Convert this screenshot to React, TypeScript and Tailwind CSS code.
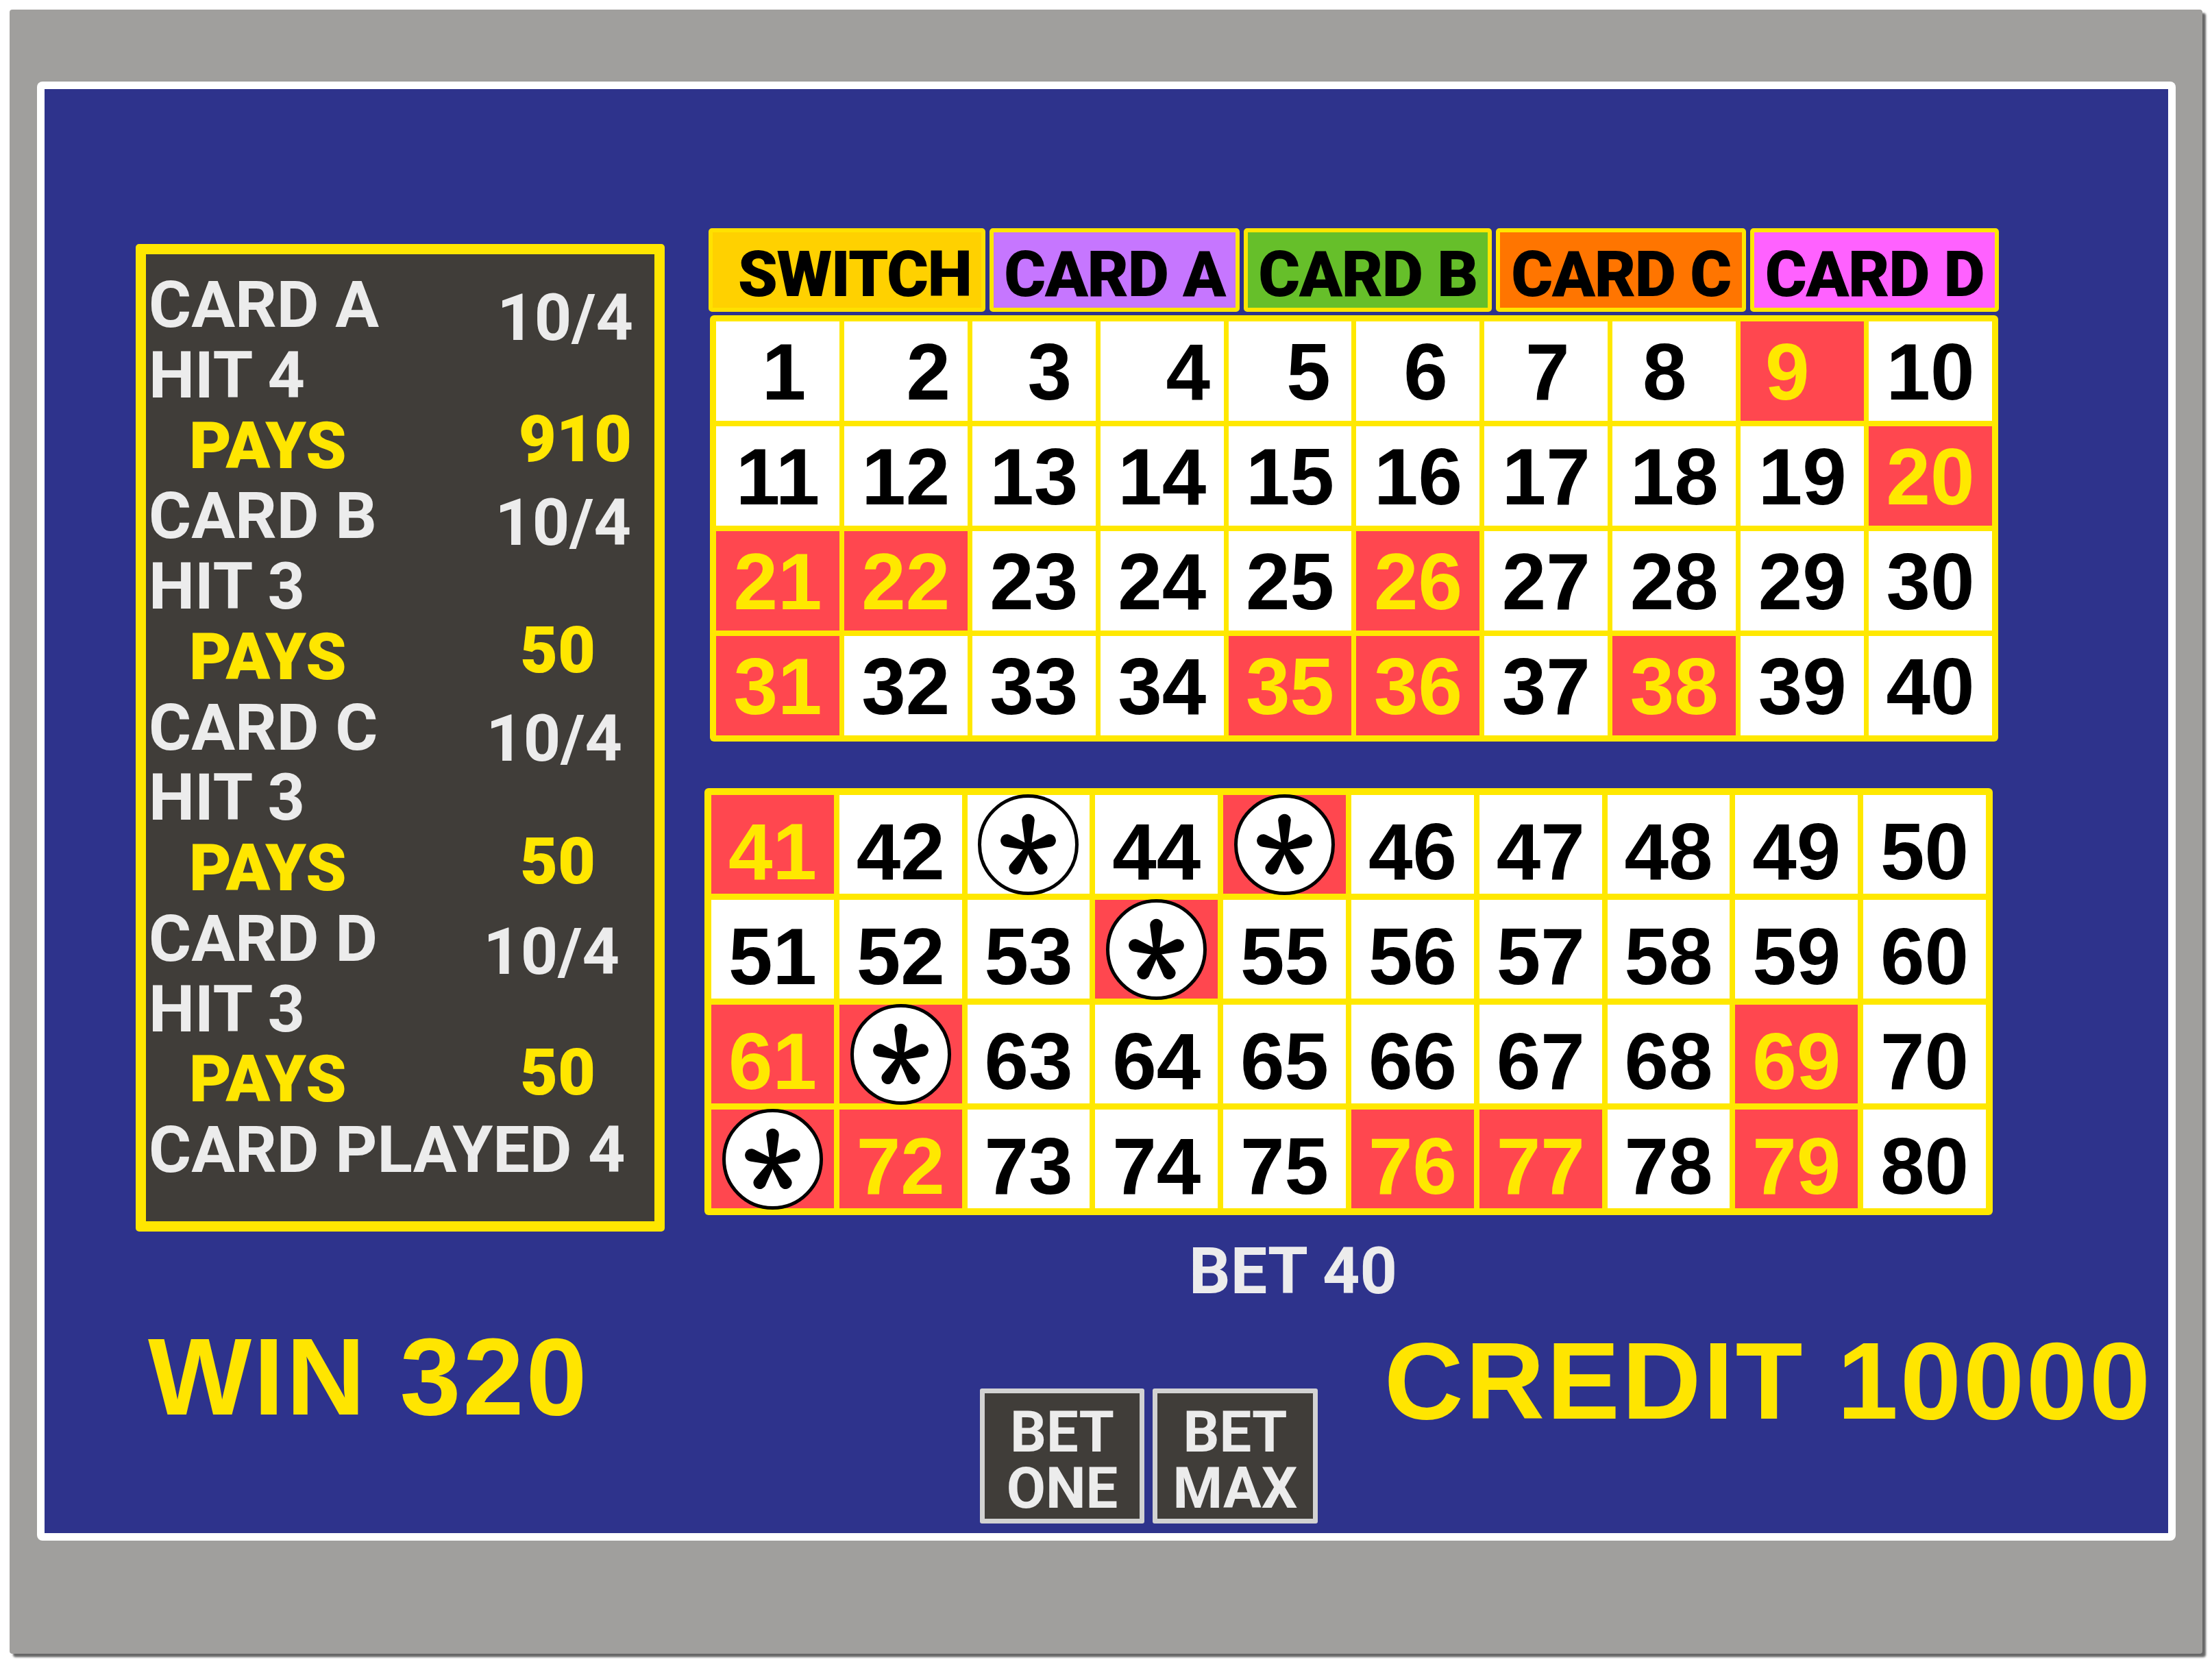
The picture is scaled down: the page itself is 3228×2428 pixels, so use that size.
import React from "react";

const upperRed = new Set([9, 20, 21, 22, 26, 31, 35, 36, 38]);
const lowerRed = new Set([41, 45, 54, 61, 62, 69, 71, 72, 76, 77, 79]);
const stars = new Set([43, 45, 54, 62, 71]);

const shift: Record<number, string> = {
  1: "ml-[18px]",
  2: "ml-[66px]",
  3: "ml-[46px]",
  4: "ml-[76px]",
  5: "ml-[54px]",
  6: "ml-[22px]",
  7: "ml-[4px]",
  8: "mr-[28px]",
  9: "mr-[44px]",
};

function Star() {
  const petal = (len: number, angle: number) => (
    <path
      key={angle}
      transform={`rotate(${angle})`}
      d={`M -3 0 L -6.6 ${-(len - 6.8)} A 6.8 6.8 0 1 1 6.6 ${-(len - 6.8)} L 3 0 Z`}
    />
  );
  return (
    <svg viewBox="-50 -50 100 100" className="w-full h-full">
      <g fill="#000" transform="translate(0 3)">
        {petal(34, 0)}
        {petal(29, 72)}
        {petal(31, 148)}
        {petal(31, 212)}
        {petal(29, 288)}
        <circle r="5.5" />
      </g>
    </svg>
  );
}

function Cell({ n, red, star, lower }: { n: number; red: boolean; star: boolean; lower: boolean }) {
  return (
    <div
      className={`${red ? "bg-[#ff474f]" : "bg-white"} ${lower ? "h-[144px]" : "h-[145px]"} flex items-center justify-center`}
    >
      {star ? (
        <div className="w-[147px] h-[147px] shrink-0 rounded-full bg-white border-[5px] border-black">
          <Star />
        </div>
      ) : (
        <span
          className={`font-['Liberation_Sans',Arial,sans-serif] font-bold text-[116px] leading-none ${
            lower ? "pt-[22px]" : "pt-[2px]"
          } ${shift[n] ?? ""} ${red ? "text-[#ffe800]" : "text-black"}`}
        >
          {n}
        </span>
      )}
    </div>
  );
}

type Row = { label: string; labelCls: string; value?: string; valueCls?: string };

const rows: Row[] = [
  { label: "CARD A", labelCls: "text-[#ececec] font-bold", value: "10/4", valueCls: "mt-[19px] mr-[31px] text-[#ececec] font-bold" },
  { label: "HIT 4", labelCls: "text-[#ececec] font-bold" },
  { label: "PAYS", labelCls: "pl-[59px] text-[#ffe600] font-black", value: "910", valueCls: "-mt-[10px] mr-[33px] text-[#ffe600] font-black" },
  { label: "CARD B", labelCls: "text-[#ececec] font-bold", value: "10/4", valueCls: "mt-[10px] mr-[34px] text-[#ececec] font-bold" },
  { label: "HIT 3", labelCls: "text-[#ececec] font-bold" },
  { label: "PAYS", labelCls: "pl-[59px] text-[#ffe600] font-black", value: "50", valueCls: "-mt-[10px] mr-[86px] text-[#ffe600] font-black" },
  { label: "CARD C", labelCls: "text-[#ececec] font-bold", value: "10/4", valueCls: "mt-[16px] mr-[47px] text-[#ececec] font-bold" },
  { label: "HIT 3", labelCls: "text-[#ececec] font-bold" },
  { label: "PAYS", labelCls: "pl-[59px] text-[#ffe600] font-black", value: "50", valueCls: "-mt-[10px] mr-[86px] text-[#ffe600] font-black" },
  { label: "CARD D", labelCls: "text-[#ececec] font-bold", value: "10/4", valueCls: "mt-[19px] mr-[51px] text-[#ececec] font-bold" },
  { label: "HIT 3", labelCls: "text-[#ececec] font-bold" },
  { label: "PAYS", labelCls: "pl-[59px] text-[#ffe600] font-black", value: "50", valueCls: "-mt-[10px] mr-[86px] text-[#ffe600] font-black" },
  { label: "CARD PLAYED 4", labelCls: "text-[#ececec] font-bold" },
];

const tabs = [
  { label: "SWITCH", cls: "w-[404px] bg-[#ffd100] border-[#ffe100] pl-[22px]" },
  { label: "CARD A", cls: "w-[365px] bg-[#c676ff] border-[#ffe600]" },
  { label: "CARD B", cls: "w-[362px] bg-[#66bf2a] border-[#ffe600]" },
  { label: "CARD C", cls: "w-[365px] bg-[#ff7500] border-[#ffe600]" },
  { label: "CARD D", cls: "w-[363px] bg-[#ff61ff] border-[#ffe600]" },
];

function BetButton({ w, bottom }: { w: string; bottom: string }) {
  return (
    <div
      className={`${w} h-[197px] border-[7px] border-[#d2d2d2] bg-[#403d39] rounded-[3px] flex flex-col items-center pt-[16px] text-[83px] leading-[82px] font-bold text-[#ececec]`}
    >
      <span className="block h-[82px]">BET</span>
      <span className="block h-[82px]">{bottom}</span>
    </div>
  );
}

export default function App() {
  const upper = Array.from({ length: 40 }, (_, i) => i + 1);
  const lower = Array.from({ length: 40 }, (_, i) => i + 41);
  return (
    <div className="w-[3228px] h-[2428px] bg-white pt-[14px] pl-[14px] overflow-hidden font-['Roboto',sans-serif]">
      <div className="w-[3200px] h-[2399px] bg-[#a09f9d] rounded-[4px] shadow-[5px_5px_3px_rgba(0,0,0,0.6)] pt-[105px] pl-[40px]">
        <div className="w-[3121px] h-[2129px] bg-white rounded-[8px] p-[11px]">
          <div className="w-full h-full bg-[#2e338c] flex flex-col">
            {/* top section */}
            <div className="flex pl-[133px] pt-[203px]">
              {/* left panel */}
              <div className="mt-[23px] w-[772px] h-[1441px] shrink-0 border-[15px] border-[#ffe600] rounded-[5px] bg-[#403d39] pt-[23px] pl-[4px] flex flex-col">
                {rows.map((r, i) => (
                  <div key={i} className="flex justify-between items-start h-[102.75px] text-[95px] leading-[102.75px] whitespace-nowrap">
                    <span className={r.labelCls}>{r.label}</span>
                    {r.value ? <span className={r.valueCls}>{r.value}</span> : null}
                  </div>
                ))}
              </div>
              {/* right column */}
              <div className="ml-[64px] w-[1883px] shrink-0 flex flex-col">
                <div className="flex gap-[6px] h-[122px]">
                  {tabs.map((t) => (
                    <div
                      key={t.label}
                      className={`${t.cls} h-full border-[6px] rounded-[5px] flex items-center justify-center pt-[12px] font-black text-[93px] leading-none tracking-[-1.5px] text-black whitespace-nowrap`}
                    >
                      {t.label}
                    </div>
                  ))}
                </div>
                <div className="w-[1880px] ml-[2px] mt-[5px] bg-[#ffe800] p-[9px] rounded-[6px] grid grid-cols-10 gap-x-[7px] gap-y-[8px]">
                  {upper.map((n) => (
                    <Cell key={n} n={n} red={upperRed.has(n)} star={false} lower={false} />
                  ))}
                </div>
                <div className="w-[1880px] -ml-[6px] mt-[68px] bg-[#ffe800] p-[10px] rounded-[6px] grid grid-cols-10 gap-x-[8px] gap-y-[9px]">
                  {lower.map((n) => (
                    <Cell key={n} n={n} red={lowerRed.has(n)} star={stars.has(n)} lower={true} />
                  ))}
                </div>
                <div className="mt-[34px] ml-[701px] text-[95px] leading-[95px] font-bold text-[#ececec] whitespace-nowrap">
                  BET 40
                </div>
              </div>
            </div>
            {/* bottom row */}
            <div className="flex items-start pl-[151px] mt-[27px]">
              <div className="w-[1214px] shrink-0 font-['Liberation_Sans',Arial,sans-serif] font-bold text-[160px] leading-[160px] tracking-[3px] text-[#ffe500] whitespace-nowrap">
                WIN 320
              </div>
              <div className="mt-[97px] flex gap-[12px] shrink-0">
                <BetButton w="w-[240px]" bottom="ONE" />
                <BetButton w="w-[241px]" bottom="MAX" />
              </div>
              <div className="ml-[97px] mt-[6px] shrink-0 font-['Liberation_Sans',Arial,sans-serif] font-bold text-[160px] leading-[160px] tracking-[3px] text-[#ffe500] whitespace-nowrap">
                CREDIT 10000
              </div>
            </div>
          </div>
        </div>
      </div>
    </div>
  );
}
